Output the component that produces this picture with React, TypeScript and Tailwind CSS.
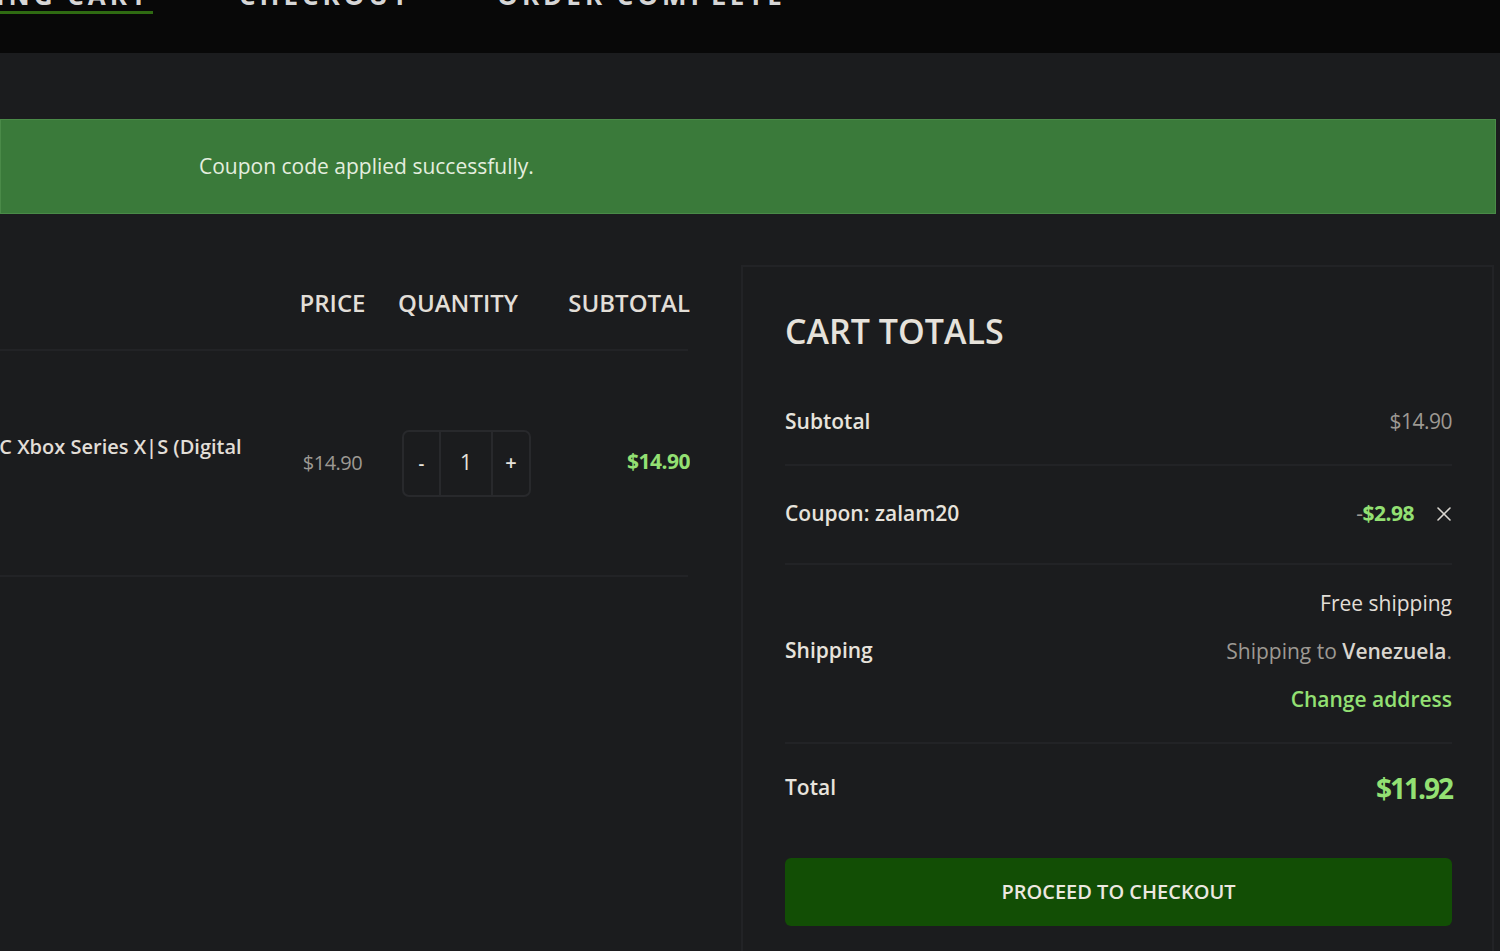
import React from "react";

function XIcon() {
  return (
    <svg width="16" height="16" viewBox="0 0 16 16" fill="none" stroke="#d9d6d0" strokeWidth="1.6" strokeLinecap="round">
      <path d="M2 2 L14 14 M14 2 L2 14" />
    </svg>
  );
}

export default function App() {
  return (
    <div className="min-h-[951px] w-[1500px] overflow-hidden bg-[#1b1c1e] font-['Open_Sans',sans-serif] text-[#e7e3dc]">
      {/* top steps bar */}
      <div className="h-[53px] bg-[#080808] overflow-hidden">
        <div className="flex items-start gap-[86px] -mt-[19px] text-[26px] leading-[28px] font-bold tracking-[4px] text-[#d6d6d6]">
          <div className="-ml-[190px] w-[343px] text-right pr-[3px] pb-[2px] border-b-[3px] border-[#2f6b12]">SHOPPING CART</div>
          <div>CHECKOUT</div>
          <div>ORDER COMPLETE</div>
        </div>
      </div>

      <div className="pt-[66px]">
        {/* notice */}
        <div className="w-[1496px] h-[95px] bg-[#3a7a3a] border border-[#4a8a48] flex items-center pl-[198px] text-[21px] text-[#e4eedf]">
          Coupon code applied successfully.
        </div>

        <div className="mt-[51px] flex items-start">
          {/* cart table */}
          <div className="w-[690px] overflow-hidden">
            <div className="flex items-center h-[84px] pb-[8px] text-[24px] font-semibold text-[#e2ded7]">
              <div className="w-[285px]" />
              <div className="w-[95px] text-center">PRICE</div>
              <div className="w-[165px] pl-[18px]">QUANTITY</div>
              <div className="flex-1 text-right">SUBTOTAL</div>
            </div>
            <div className="w-[688px] h-[2px] bg-[#222326]" />
            <div className="flex items-center h-[224px]">
              <div className="w-[285px] overflow-hidden pb-[32px]">
                <div className="-ml-[13px] whitespace-nowrap text-[20px] font-semibold text-[#e2ded7]">PC Xbox Series X|S (Digital</div>
              </div>
              <div className="w-[95px] text-center text-[20px] tracking-[-0.5px] text-[#9d9993]">$14.90</div>
              <div className="w-[165px] pl-[22px]">
                <div className="flex h-[67px] w-[129px] rounded-[7px] border-2 border-[#28292c] text-[#e7e3dc]">
                  <div className="w-[37px] flex items-center justify-center text-[18px] font-semibold border-r-2 border-[#28292c]">-</div>
                  <div className="w-[52px] flex items-center justify-center text-[21px] border-r-2 border-[#28292c]">1</div>
                  <div className="flex-1 flex items-center justify-center text-[20px] font-semibold">+</div>
                </div>
              </div>
              <div className="flex-1 text-right pb-[3px] text-[21px] tracking-[-0.5px] font-bold text-[#93e073]">$14.90</div>
            </div>
            <div className="w-[688px] h-[2px] bg-[#222326]" />
          </div>

          {/* cart totals */}
          <div className="ml-[51px] w-[753px] min-h-[700px] border-2 border-[#222326] pl-[42px] pr-[40px] pt-[43px]">
            <h2 className="text-[34px] leading-[42px] font-semibold text-[#e6e2db]">CART TOTALS</h2>

            <div className="mt-[24px] flex items-center justify-between h-[88px] pt-[3px] text-[21px]">
              <div className="font-semibold">Subtotal</div>
              <div className="text-[#9d9993] tracking-[-0.5px]">$14.90</div>
            </div>
            <div className="h-[2px] bg-[#222326]" />

            <div className="flex items-center justify-between h-[97px] pb-[2px] text-[21px]">
              <div className="font-semibold">Coupon: zalam20</div>
              <div className="flex items-center gap-[22px]">
                <div className="tracking-[-0.5px]">
                  <span className="text-[#9d9993]">-</span>
                  <span className="font-bold text-[#93e073]">$2.98</span>
                </div>
                <XIcon />
              </div>
            </div>
            <div className="h-[2px] bg-[#222326]" />

            <div className="flex items-center justify-between h-[177px] pb-[6px] text-[21px]">
              <div className="font-semibold">Shipping</div>
              <div className="flex flex-col items-end gap-[24px] leading-[24px]">
                <div className="text-[#e2ded7]">Free shipping</div>
                <div className="text-[#9d9993]">
                  Shipping to <span className="font-semibold text-[#d9d5ce]">Venezuela</span>.
                </div>
                <div className="font-semibold text-[#93e073]">Change address</div>
              </div>
            </div>
            <div className="h-[2px] bg-[#222326]" />

            <div className="flex items-center justify-between h-[88px]">
              <div className="text-[21px] font-semibold">Total</div>
              <div className="text-[28px] tracking-[-2px] font-bold text-[#93e073]">$11.92</div>
            </div>

            <button className="mt-[26px] w-full h-[68px] rounded-[6px] bg-[#124e05] text-[20px] font-semibold text-[#ece8e0]">
              PROCEED TO CHECKOUT
            </button>
          </div>
        </div>
      </div>
    </div>
  );
}
